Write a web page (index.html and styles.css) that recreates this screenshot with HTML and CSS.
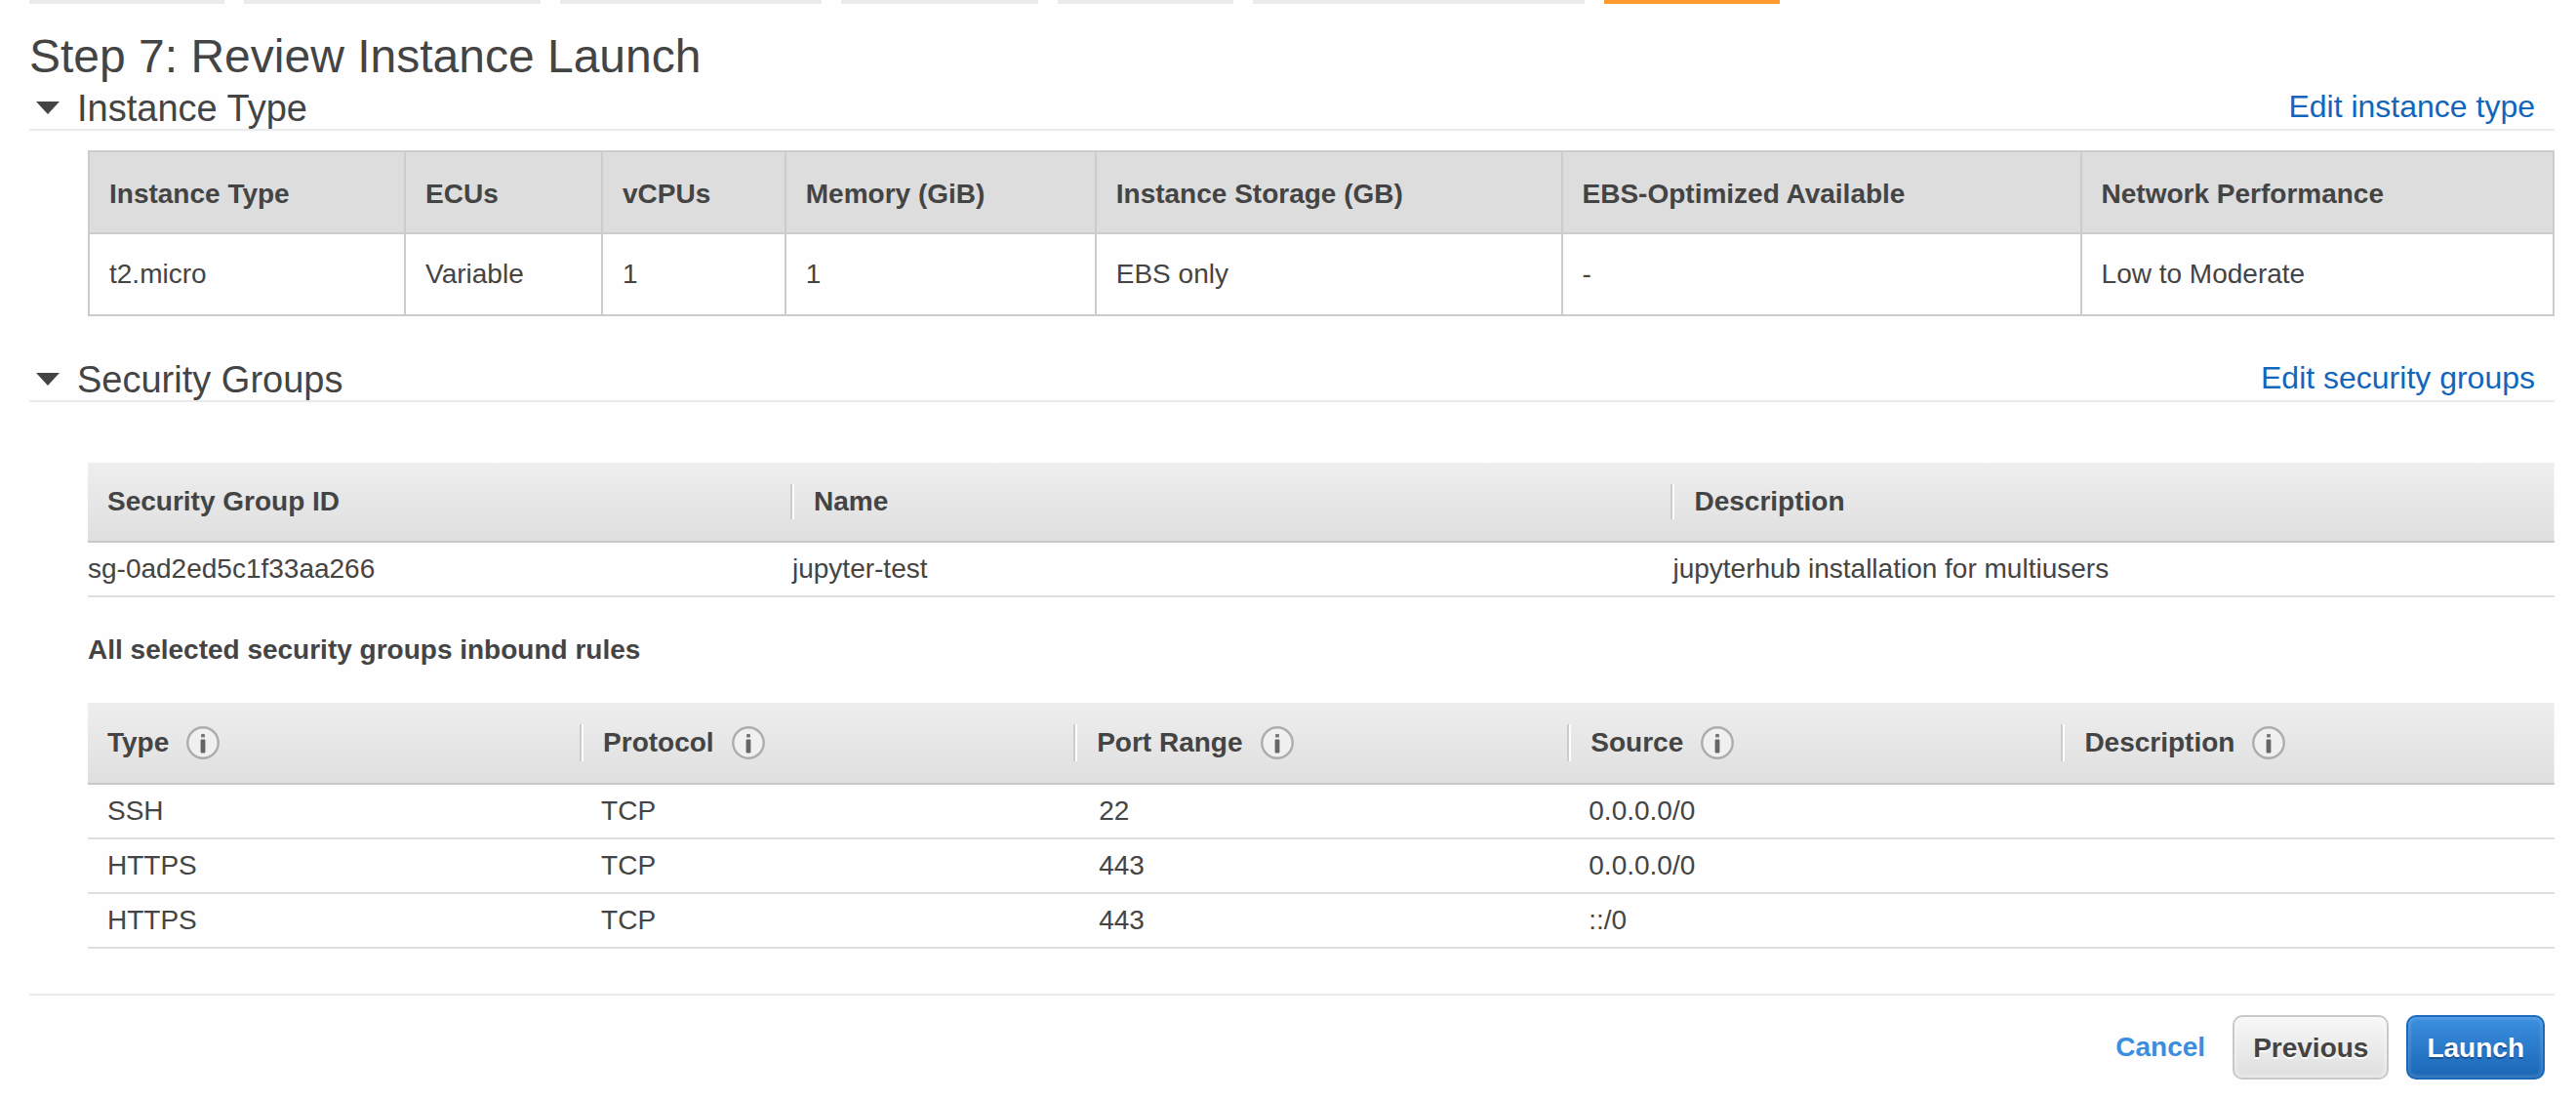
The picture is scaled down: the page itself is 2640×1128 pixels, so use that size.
FILE: index.html
```html
<!DOCTYPE html>
<html lang="en">
<head>
<meta charset="utf-8">
<title>Step 7: Review Instance Launch</title>
<link rel="stylesheet" href="styles.css">
</head>
<body>
<svg class="sprite" aria-hidden="true">
  <symbol id="info" viewBox="0 0 34 34">
    <circle cx="17" cy="17" r="15.7" fill="#f0f0f0" stroke="#adadad" stroke-width="2.4"/>
    <rect x="15" y="8" width="4" height="3.6" rx="1" fill="#777"/>
    <rect x="14.6" y="13.6" width="4.8" height="14" rx="1" fill="#666"/>
  </symbol>
</svg>
<main class="page">
  <ol class="steps">
    <li class="step step-1"></li>
    <li class="step step-2"></li>
    <li class="step step-3"></li>
    <li class="step step-4"></li>
    <li class="step step-5"></li>
    <li class="step step-6"></li>
    <li class="step step-7 current"></li>
  </ol>
  <h1 class="title">Step 7: Review Instance Launch</h1>

  <section class="section">
    <header class="section-head">
      <h2 class="section-title"><button class="toggle" type="button" aria-expanded="true"><svg class="caret" viewBox="0 0 24 14" preserveAspectRatio="none" aria-hidden="true"><path d="M0 0H24L12 14Z" fill="#444"/></svg>Instance Type</button></h2>
      <a class="edit" href="#">Edit instance type</a>
    </header>
    <table class="specs">
      <colgroup><col class="s1"><col class="s2"><col class="s3"><col class="s4"><col class="s5"><col class="s6"><col></colgroup>
      <thead>
        <tr><th>Instance Type</th><th>ECUs</th><th>vCPUs</th><th>Memory (GiB)</th><th>Instance Storage (GB)</th><th>EBS-Optimized Available</th><th>Network Performance</th></tr>
      </thead>
      <tbody>
        <tr><td>t2.micro</td><td>Variable</td><td>1</td><td>1</td><td>EBS only</td><td>-</td><td>Low to Moderate</td></tr>
      </tbody>
    </table>
  </section>

  <section class="section">
    <header class="section-head">
      <h2 class="section-title"><button class="toggle" type="button" aria-expanded="true"><svg class="caret" viewBox="0 0 24 14" preserveAspectRatio="none" aria-hidden="true"><path d="M0 0H24L12 14Z" fill="#444"/></svg>Security Groups</button></h2>
      <a class="edit" href="#">Edit security groups</a>
    </header>
    <table class="grid groups">
      <colgroup><col class="g1"><col class="g2"><col></colgroup>
      <thead>
        <tr><th><div class="head">Security Group ID</div></th><th><div class="head">Name</div></th><th><div class="head">Description</div></th></tr>
      </thead>
      <tbody>
        <tr><td>sg-0ad2ed5c1f33aa266</td><td>jupyter-test</td><td>jupyterhub installation for multiusers</td></tr>
      </tbody>
    </table>
    <h3 class="subtitle">All selected security groups inbound rules</h3>
    <table class="grid rules">
      <colgroup><col class="r"><col class="r"><col class="r"><col class="r"><col></colgroup>
      <thead>
        <tr>
          <th><div class="head">Type<svg class="info"><use href="#info"/></svg></div></th>
          <th><div class="head">Protocol<svg class="info"><use href="#info"/></svg></div></th>
          <th><div class="head">Port Range<svg class="info"><use href="#info"/></svg></div></th>
          <th><div class="head">Source<svg class="info"><use href="#info"/></svg></div></th>
          <th><div class="head">Description<svg class="info"><use href="#info"/></svg></div></th>
        </tr>
      </thead>
      <tbody>
        <tr><td>SSH</td><td>TCP</td><td class="port">22</td><td>0.0.0.0/0</td><td></td></tr>
        <tr><td>HTTPS</td><td>TCP</td><td class="port">443</td><td>0.0.0.0/0</td><td></td></tr>
        <tr><td>HTTPS</td><td>TCP</td><td class="port">443</td><td>::/0</td><td></td></tr>
      </tbody>
    </table>
  </section>

  <footer class="actions">
    <a class="cancel" href="#">Cancel</a>
    <button class="btn" type="button">Previous</button>
    <button class="btn btn-primary" type="button">Launch</button>
  </footer>
</main>
</body>
</html>
```
FILE: styles.css
```css
* { box-sizing: border-box; }

body {
  margin: 0;
  background: #fefefe;
  color: #444;
  font: 28px/34px "Liberation Sans", Arial, sans-serif;
}

.sprite { display: none; }

.page { padding: 0 22px 22px 30px; }

/* Wizard steps */
.steps {
  display: flex;
  gap: 20px;
  margin: 0;
  padding: 0;
  list-style: none;
}
.step { height: 4px; background: #ebebeb; }
.step-1 { width: 200px; }
.step-2 { width: 304px; }
.step-3 { width: 268px; }
.step-4 { width: 202px; }
.step-5 { width: 180px; }
.step-6 { width: 340px; }
.step-7 { width: 180px; }
.current { background: #ff9a2e; }

.title {
  margin: 26px 0 4px;
  font-size: 48px;
  line-height: 56px;
  font-weight: 400;
}

/* Sections */
.section + .section { margin-top: 44px; }
.section-head {
  display: flex;
  justify-content: space-between;
  align-items: flex-start;
  padding-right: 20px;
  border-bottom: 2px solid #ebebeb;
}
.section-title { margin: 0; font-size: 38px; line-height: 42px; font-weight: 400; }
.toggle {
  display: flex;
  align-items: center;
  gap: 18px;
  padding: 0 0 0 7px;
  border: 0;
  background: none;
  color: inherit;
  font: inherit;
}
.caret { width: 24px; height: 13px; margin-bottom: 2px; }
.edit { color: #1166bb; font-size: 32px; line-height: 38px; text-decoration: none; }

table {
  width: calc(100% - 60px);
  margin-left: 60px;
  table-layout: fixed;
  border-collapse: collapse;
}
th, td { padding: 0; text-align: left; vertical-align: top; }

/* Instance specification table */
.specs { margin-top: 20px; border-collapse: separate; border-spacing: 0; border: solid #ccc; border-width: 2px 2px 0 2px; }
.specs th, .specs td { border-bottom: 2px solid #ccc; }
.specs th { padding: 26px 20px 22px; background: #ddd; }
.specs td { padding: 24px 20px; }
.specs th + th, .specs td + td { border-left: 2px solid #ccc; }
.s1 { width: 12.76%; }
.s2 { width: 8%; }
.s3 { width: 7.44%; }
.s4 { width: 12.6%; }
.s5 { width: 18.93%; }
.s6 { width: 21.08%; }

/* Security tables */
.grid thead { background: linear-gradient(#eee, #dfdfdf); }
.grid th { padding: 22px 0; border-bottom: 2px solid #c8c8c8; }
.grid td { padding: 10px 0; border-bottom: 2px solid #dfdfdf; }
.grid tr { height: 56px; }
.head {
  display: flex;
  align-items: center;
  gap: 18px;
  padding-left: 20px;
  line-height: 36px;
}
th + th .head { border-left: 2px solid #fff; }
th:not(:last-child) .head { border-right: 2px solid #ccc; }

.groups { margin-top: 62px; }
.g1 { width: 28.56%; }
.g2 { width: 35.7%; }

.subtitle { margin: 37px 0 37px 60px; font-size: 28px; font-weight: 700; }

.r { width: 20.02%; }
.rules .head { line-height: 38px; }
.rules td { padding-left: 20px; }
.rules .port { padding-left: 24px; }
.info { width: 34px; height: 34px; }

/* Footer */
.actions {
  display: flex;
  justify-content: flex-end;
  align-items: center;
  margin-top: 46px;
  padding: 20px 10px 0 0;
  border-top: 2px solid #ebebeb;
}
.cancel { margin-right: 28px; color: #3b8ddd; font-weight: 700; text-decoration: none; }
.btn {
  padding: 15px 19px 13px;
  border: 2px solid #c8c8c8;
  border-radius: 10px;
  background: linear-gradient(#f7f7f7, #dfdfdf);
  box-shadow: inset 0 0 4px 1px rgba(255, 255, 255, 0.6);
  color: #444;
  font: inherit;
  font-weight: 700;
  text-shadow: 0 2px 0 #fff;
}
.btn-primary {
  margin-left: 18px;
  border-color: #1a69ba;
  background: linear-gradient(#3c8fe0, #1a66b5);
  box-shadow: inset 0 0 4px 1px rgba(255, 255, 255, 0.25);
  color: #fff;
  text-shadow: 0 2px 0 #1b4f98;
}
```
